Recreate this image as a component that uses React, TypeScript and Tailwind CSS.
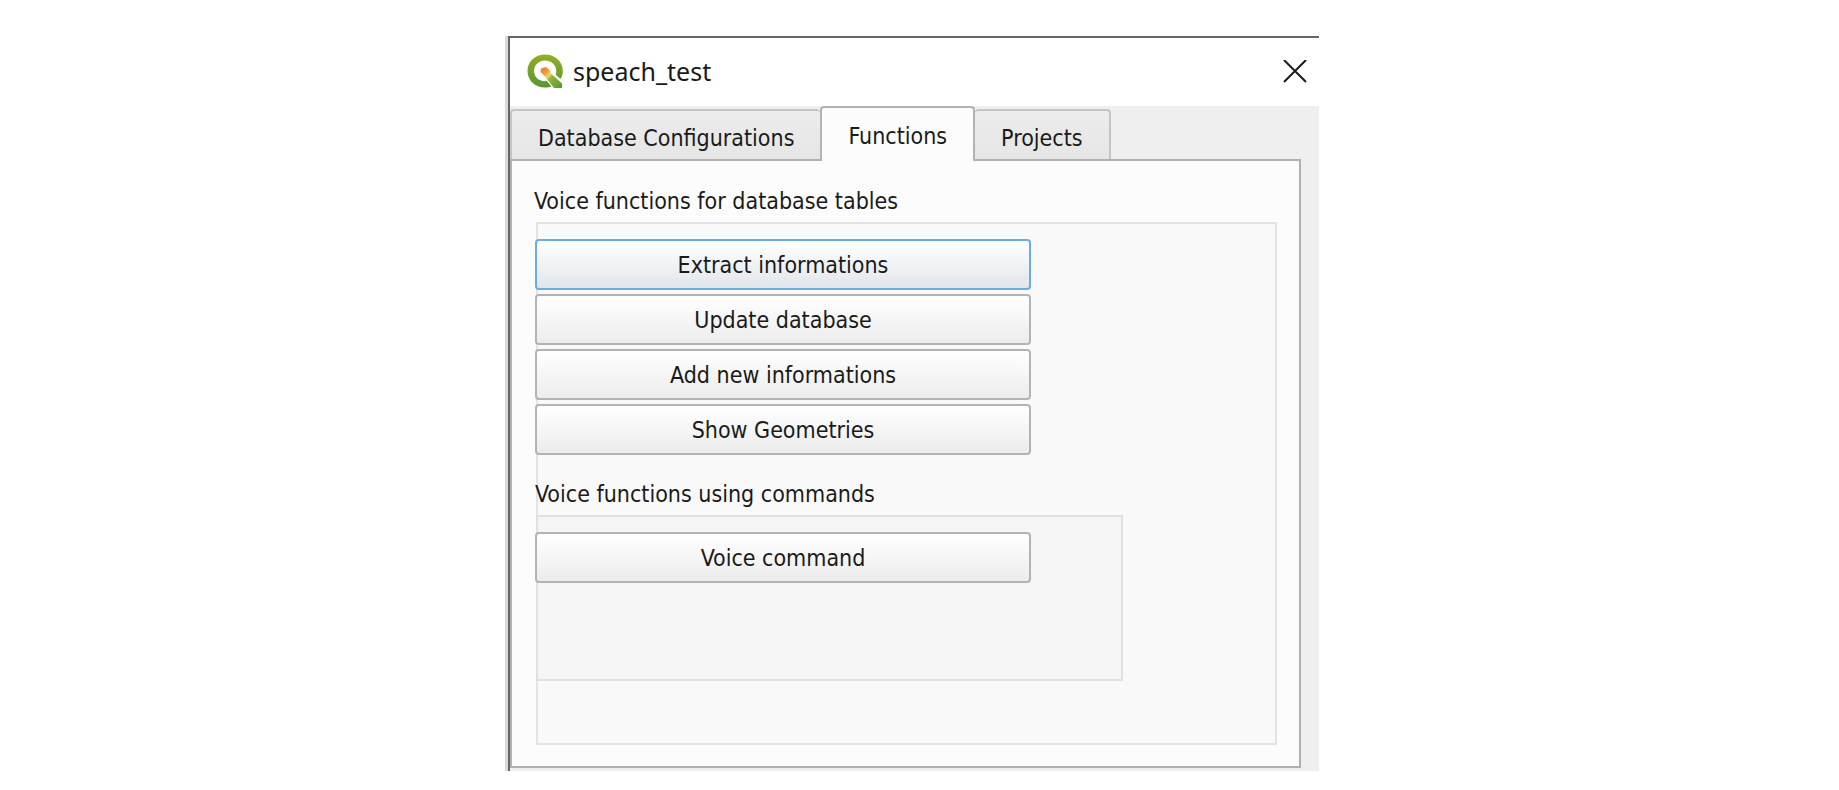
import { useState } from 'react';
import clsx from 'clsx';

const tabs = [
  { id: 'database', label: 'Database Configurations' },
  { id: 'functions', label: 'Functions' },
  { id: 'projects', label: 'Projects' },
];

const tableActions = [
  'Extract informations',
  'Update database',
  'Add new informations',
  'Show Geometries',
];

function QgisLogo() {
  return (
    <svg viewBox="0 0 36 36" className="size-9" aria-hidden="true">
      <defs>
        <linearGradient id="ring" x1="0" y1="0" x2="0" y2="1">
          <stop offset="0" stopColor="#93b023" />
          <stop offset="1" stopColor="#589632" />
        </linearGradient>
        <linearGradient id="brush" x1="0" y1="0" x2="1" y2="1">
          <stop offset="0" stopColor="#ee7913" />
          <stop offset="0.25" stopColor="#ee9a3a" />
          <stop offset="0.4" stopColor="#e8d86a" />
          <stop offset="0.5" stopColor="#8fb53c" />
          <stop offset="1" stopColor="#589632" />
        </linearGradient>
      </defs>
      <path
        d="M18 0.500C8 0.500 0.500 7.500 0.500 17C0.500 26.500 8 33.500 18 33.500C20.500 33.500 22.800 33.200 24.500 32.400L19.800 27C12.500 28 7 23.300 7 17C7 11 12 6.500 18 6.500C24.300 6.500 29.300 11 29.300 17C29.300 18.300 29.100 19.600 28.700 20.800L33.500 25C35 22.500 35.800 20 35.800 17C35.800 7.500 28 0.500 18 0.500Z"
        fill="url(#ring)"
      />
      <path d="M14 14.500L19 13L23 16.500L23.500 19L35 29.500V34H27L18 22.500L16 20.500L13.500 18Z" fill="url(#brush)" />
    </svg>
  );
}

function PushButton({ label, focused = false }: { label: string; focused?: boolean }) {
  return (
    <button
      type="button"
      className={clsx(
        'h-[51px] w-full rounded border-2 bg-linear-to-b pt-0.5 text-center',
        focused
          ? 'border-[#69aedd] from-white to-[#e1e6eb]'
          : 'border-[#b3b3b3] from-white to-[#ececec]'
      )}
    >
      {label}
    </button>
  );
}

function FunctionsPage() {
  return (
    <div className="px-6 pt-[25px] pb-[21px]">
      <h2 className="-ml-0.5 leading-[30px]">Voice functions for database tables</h2>
      <div className="mt-1.5 -mr-0.5 border-2 border-[#e3e3e3] bg-[#f9f9f9] pt-[15px] pb-[62px]">
        <div className="-ml-[3px] flex max-w-[496px] flex-col gap-1">
          {tableActions.map((label, index) => (
            <PushButton key={label} label={label} focused={index === 0} />
          ))}
        </div>
        <h2 className="mt-6 -ml-[3px] leading-[30px]">Voice functions using commands</h2>
        <div className="mt-1.5 -ml-0.5 max-w-[587px] border-2 border-[#e0e0e0] bg-[#f5f5f5] pt-[15px] pb-24">
          <div className="-ml-[3px] max-w-[496px]">
            <PushButton label="Voice command" />
          </div>
        </div>
      </div>
    </div>
  );
}

export default function App() {
  const [active, setActive] = useState('functions');

  return (
    <main className="flex min-h-screen items-start justify-center bg-white pt-9 pr-[15px] font-['DejaVu_Sans_Condensed','Noto_Sans',sans-serif] text-[23px] text-[#1a1a1a]">
      <div className="w-full max-w-[814px] border-l-3 border-[#d9d9d9]">
        <div className="border-t-2 border-l-2 border-[#666] bg-[#efefef] pb-[3px]">
          <header className="flex h-[68px] items-center justify-between bg-white pr-3 pl-[17px]">
            <div className="flex items-center gap-2.5">
              <QgisLogo />
              <h1 className="font-['Noto_Sans',sans-serif] text-[25px]">speach_test</h1>
            </div>
            <button type="button" aria-label="Close">
              <svg viewBox="0 0 24 24" className="size-6" fill="none" stroke="#1a1a1a" strokeWidth="2">
                <path d="M1 0L23 22M23 0L1 22" />
              </svg>
            </button>
          </header>

          <div role="tablist" className="flex h-[53px] items-end">
            {tabs.map((tab) => (
              <button
                key={tab.id}
                type="button"
                role="tab"
                aria-selected={active === tab.id}
                onClick={() => setActive(tab.id)}
                className={clsx(
                  'rounded-t border-t-2 px-[26px]',
                  active === tab.id
                    ? 'z-10 -mb-0.5 h-[55px] border-x-2 border-[#b3b3b3] bg-[#fcfcfc] pt-1'
                    : 'h-[50px] border-[#c4c4c4] bg-linear-to-b from-[#ececec] to-[#e6e6e6] pt-1.5 first:border-l-2 last:border-r-2'
                )}
              >
                {tab.label}
              </button>
            ))}
          </div>

          <div role="tabpanel" className="mr-[18px] border-2 border-[#b0b0b0] bg-[#fcfcfc]">
            {active === 'functions' && <FunctionsPage />}
          </div>
        </div>
      </div>
    </main>
  );
}
